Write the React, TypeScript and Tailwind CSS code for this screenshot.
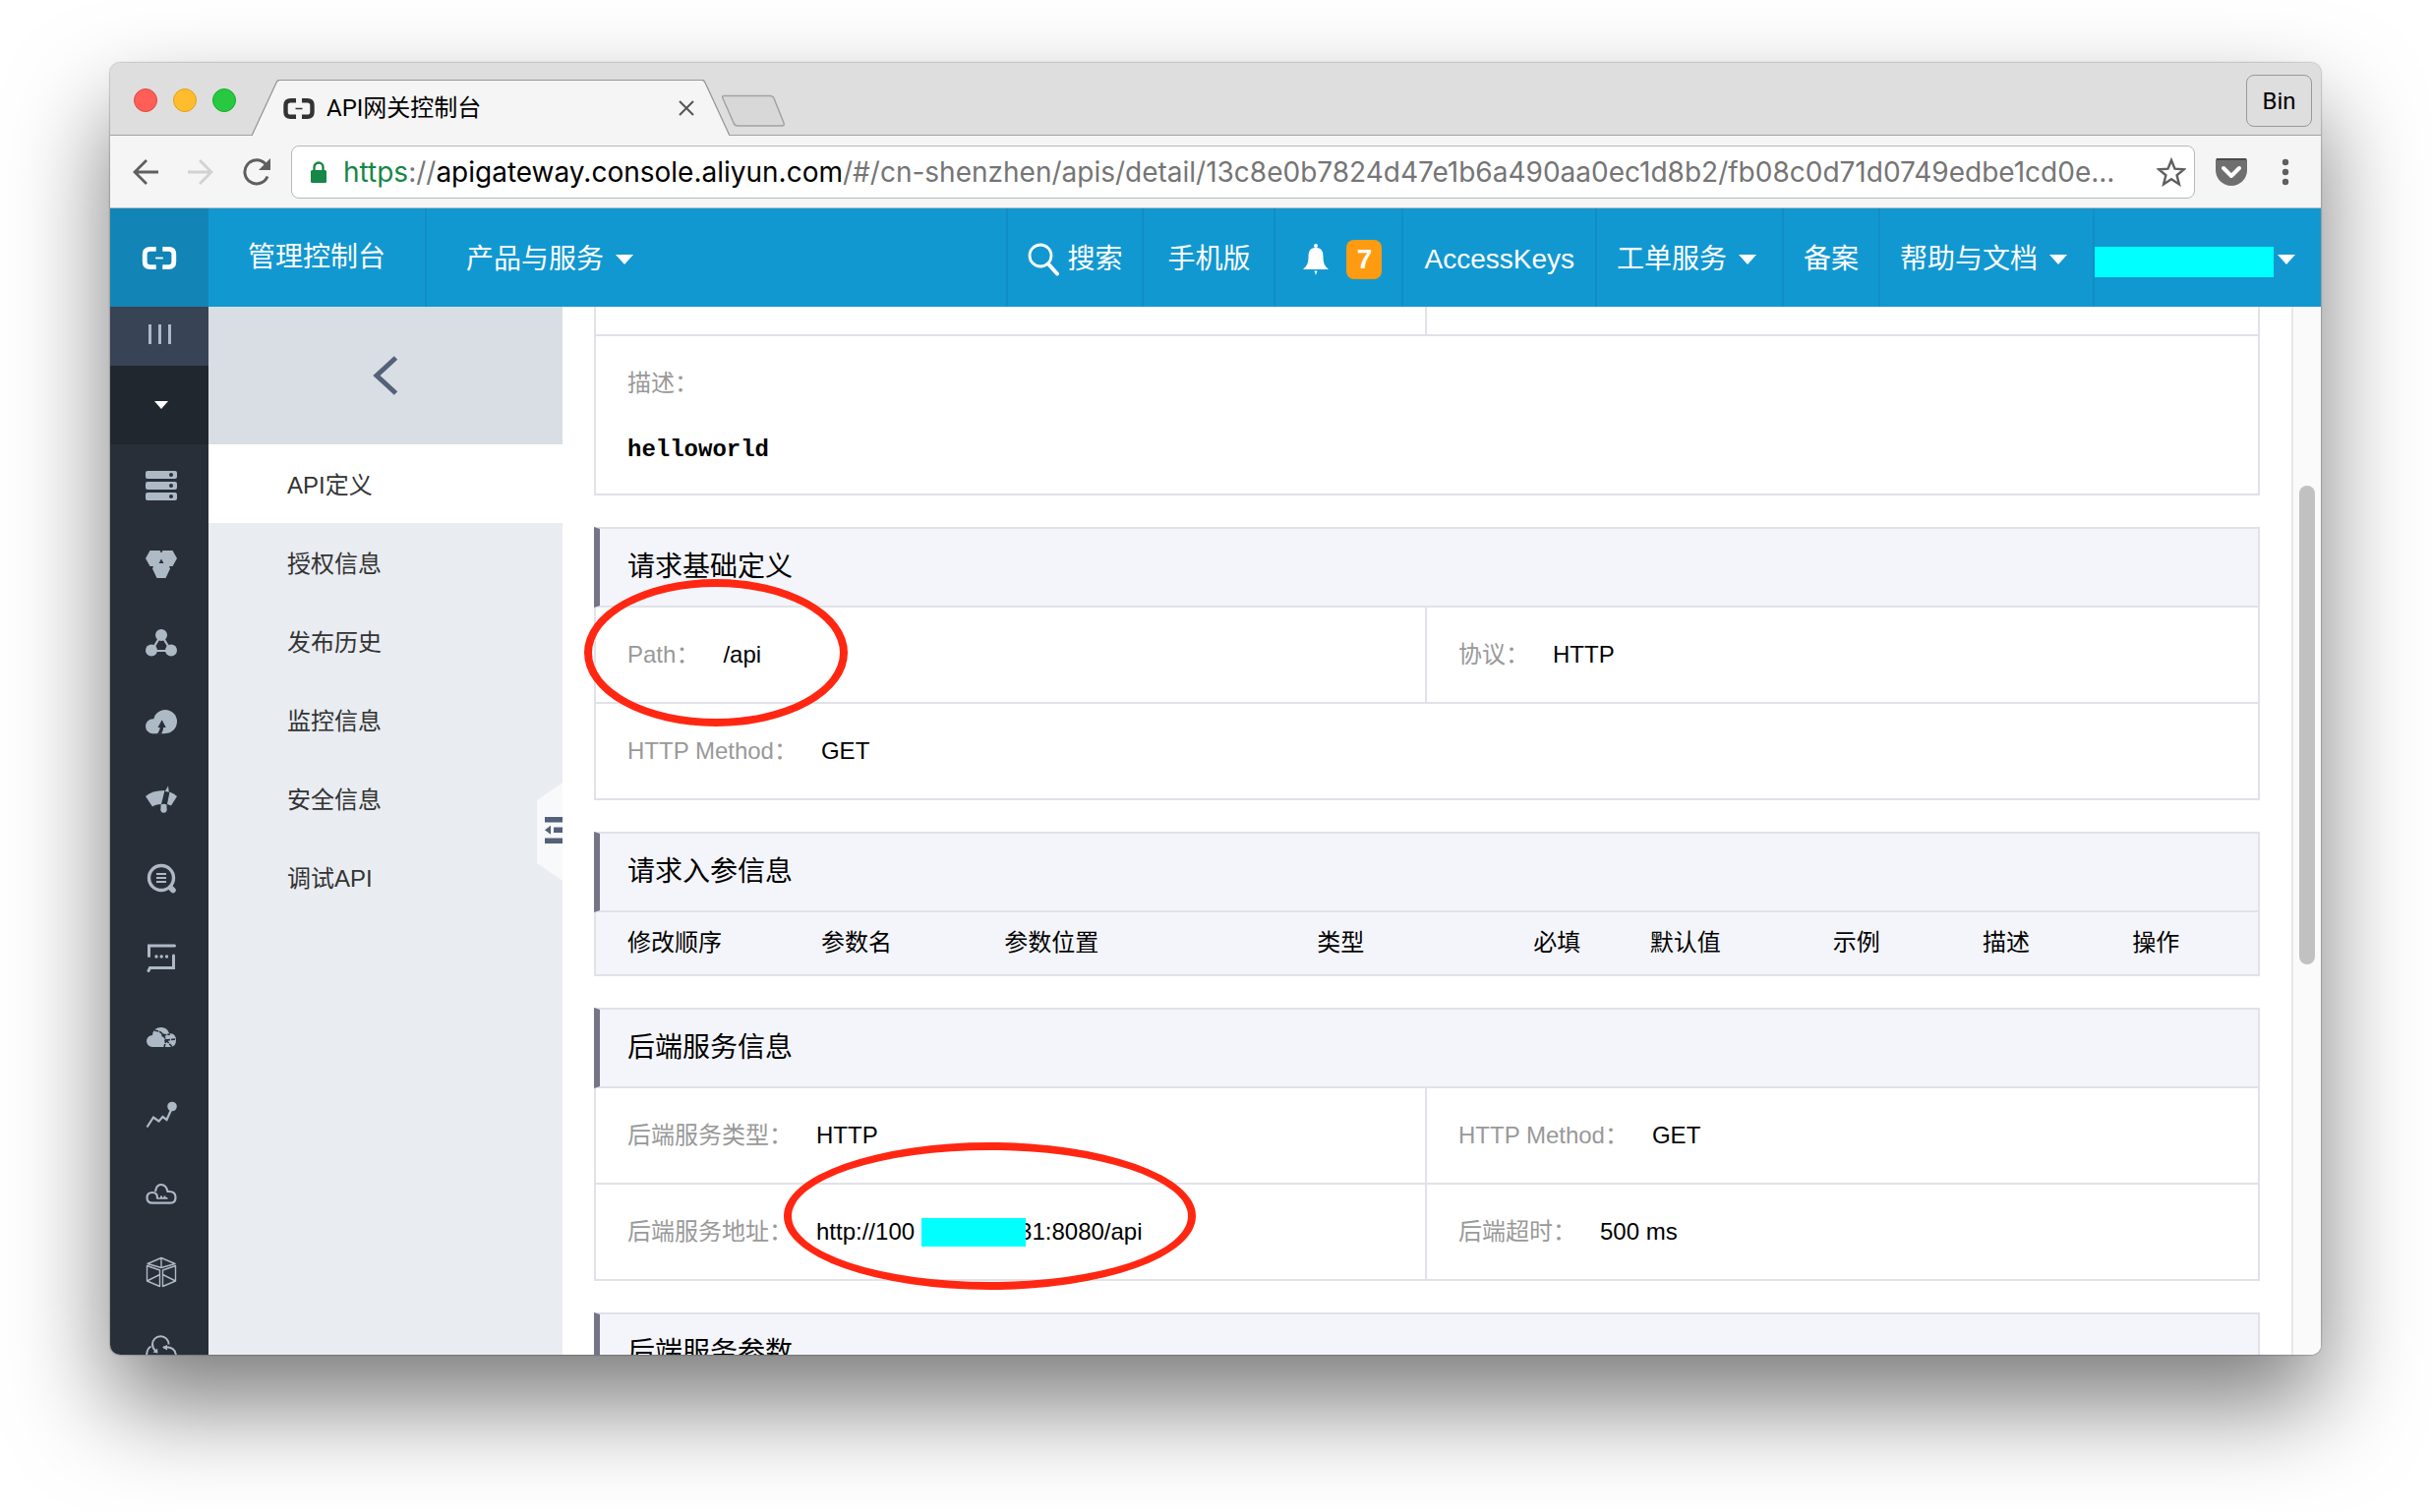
import React from "react";

const sans = "font-['Liberation_Sans','Noto_Sans_CJK_SC',sans-serif]";
const system = "font-[Roboto,'Noto_Sans_CJK_SC',sans-serif]";

function Caret({ className = "h-[10px] w-[18px]" }: { className?: string }) {
  return (
    <svg viewBox="0 0 18 10" className={`shrink-0 ${className}`} fill="currentColor" aria-hidden="true">
      <path d="M0 0h18L9 10z" />
    </svg>
  );
}

function BracketLogo({ className }: { className: string }) {
  return (
    <svg viewBox="0 0 32 21" className={className} fill="none" aria-hidden="true">
      <path d="M13 2.2H7.5Q2.5 2.2 2.5 7v7q0 4.800 5 4.800H13" stroke="currentColor" strokeWidth="4.400" />
      <path d="M19 2.200h5.500q5 0 5 4.800v7q0 4.800-5 4.800H19" stroke="currentColor" strokeWidth="4.400" />
      <path d="M12.500 10.500h7" stroke="currentColor" strokeWidth="1.600" />
    </svg>
  );
}

function TabStrip() {
  return (
    <div className="relative flex h-[74px] shrink-0 items-end bg-[#dedede]">
      <div className="absolute inset-x-0 bottom-0 h-px bg-[#a0a0a0]" />
      <div className="flex h-full w-[144px] items-center gap-4 pl-6 pt-0.5">
        <button aria-label="Close window" className="size-6 rounded-full border border-[#e2463f] bg-[#ff5f57]" />
        <button aria-label="Minimize window" className="size-6 rounded-full border border-[#e1a116] bg-[#ffbd2e]" />
        <button aria-label="Zoom window" className="size-6 rounded-full border border-[#12ac28] bg-[#28c940]" />
      </div>
      <div className="relative flex h-[57px]">
        <svg viewBox="0 0 28 57" className="h-full w-7" aria-hidden="true">
          <path d="M0 57L25 3Q26 .5 28 .5V57z" fill="#f5f5f5" />
          <path d="M0 57L25 3Q26 .5 28 .5" fill="none" stroke="#979797" strokeWidth="1.300" />
        </svg>
        <div className="flex w-[430px] items-center gap-3 border-t border-[#979797] bg-[#f5f5f5] pl-1 pr-2">
          <BracketLogo className="h-[21px] w-8 text-[#333]" />
          <span className={`${system} flex-1 text-2xl text-black`}>API网关控制台</span>
          <button aria-label="Close tab" className="text-[#555]">
            <svg viewBox="0 0 16 16" className="size-4" fill="none" stroke="currentColor" strokeWidth="2">
              <path d="M1 1l14 14M15 1L1 15" />
            </svg>
          </button>
        </div>
        <svg viewBox="0 0 28 57" className="h-full w-7" aria-hidden="true">
          <path d="M28 57L3 3Q2 .5 0 .5V57z" fill="#f5f5f5" />
          <path d="M28 57L3 3Q2 .5 0 .5" fill="none" stroke="#979797" strokeWidth="1.300" />
        </svg>
      </div>
      <button aria-label="New tab" className="mb-2 -ml-2.5">
        <svg viewBox="0 0 68 34" className="h-[34px] w-[68px]">
          <path d="M4 1.500h47q3 0 4 2.500l10 25q1 3-2 3H18q-3 0-4-3L3 4q-1-2.500 1-2.500z" fill="#d8d8d8" stroke="#a3a3a3" strokeWidth="1.500" />
        </svg>
      </button>
      <div className="flex-1" />
      <button className={`${system} mb-[9px] mr-[9px] h-[53px] w-[67px] rounded-lg border border-[#999] bg-[#dedede] text-2xl text-black`}>Bin</button>
    </div>
  );
}

function Toolbar() {
  return (
    <div className="flex h-[74px] shrink-0 items-center border-b border-[#b9b9b9] bg-[#f5f5f5] pl-[22px] pr-8">
      <button aria-label="Back" className="text-[#5f5f5f]">
        <svg viewBox="0 0 28 28" className="size-7" fill="none" stroke="currentColor" strokeWidth="2.800">
          <path d="M27 14H3M15 2L3 14l12 12" />
        </svg>
      </button>
      <button aria-label="Forward" className="ml-7 text-[#d2d2d2]">
        <svg viewBox="0 0 28 28" className="size-7" fill="none" stroke="currentColor" strokeWidth="2.800">
          <path d="M1 14h24M13 2l12 12-12 12" />
        </svg>
      </button>
      <button aria-label="Reload" className="ml-7 text-[#5f5f5f]">
        <svg viewBox="0 0 30 30" className="size-[30px]" fill="none">
          <path d="M26 19.500A12 12 0 1 1 24 7" stroke="currentColor" strokeWidth="3" />
          <path d="M29 1v12H17z" fill="currentColor" />
        </svg>
      </button>
      <div className="ml-5 flex h-[54px] min-w-0 flex-1 items-center rounded-lg border border-[#b8b8b8] bg-white pl-[18px] pr-2">
        <svg viewBox="0 0 18 22" className="h-[22px] w-[18px] shrink-0" fill="none" aria-hidden="true">
          <path d="M4.500 10V6a4.500 4.500 0 0 1 9 0v4" stroke="#168746" strokeWidth="2.400" />
          <rect x="1" y="9" width="16" height="13" rx="1.500" fill="#168746" />
        </svg>
        <a
          href="#/cn-shenzhen/apis"
          className="ml-4 min-w-0 flex-1 overflow-hidden whitespace-nowrap font-[Inter,sans-serif] text-[28px] leading-10 text-[#757575]"
        >
          <span className="text-[#168746]">https</span>://<span className="text-black">apigateway.console.aliyun.com</span>
          /#/cn-shenzhen/apis/detail/13c8e0b7824d47e1b6a490aa0ec1d8b2/fb08c0d71d0749edbe1cd0e...
        </a>
        <button aria-label="Bookmark this page" className="ml-2 text-[#5f5f5f]">
          <svg viewBox="0 0 30 30" className="size-[30px]" fill="none" stroke="currentColor" strokeWidth="2.400">
            <path d="M15 3l3.500 8.700 9.300.6-7.200 6 2.300 9.100L15 22.300l-7.900 5.100 2.300-9.100-7.200-6 9.300-.6z" />
          </svg>
        </button>
      </div>
      <button aria-label="Pocket" className="ml-5">
        <svg viewBox="0 0 34 30" className="h-[30px] w-[34px]" fill="none">
          <path d="M3 1h28q2 0 2 2v10a16 16 0 0 1-32 0V3q0-2 2-2z" fill="#6f6f6f" />
          <path d="M2 2h30" stroke="#4a4a4a" strokeWidth="2" />
          <path d="M9 11l8 8 8-8" stroke="#fff" strokeWidth="4" strokeLinecap="round" strokeLinejoin="round" />
        </svg>
      </button>
      <button aria-label="Menu" className="ml-[34px] text-[#5f5f5f]">
        <svg viewBox="0 0 8 28" className="h-7 w-2" fill="currentColor">
          <circle cx="4" cy="4" r="3.200" />
          <circle cx="4" cy="14" r="3.200" />
          <circle cx="4" cy="24" r="3.200" />
        </svg>
      </button>
    </div>
  );
}

function ConsoleHeader() {
  const item = "flex h-full items-center border-l-2 border-[#0f8ec5] pt-1";
  return (
    <header className="flex h-[100px] shrink-0 items-center whitespace-nowrap bg-[#1298d1] text-[28px] leading-10 text-white">
      <a href="#home" aria-label="Home" className="flex h-full w-[100px] items-center justify-center bg-[#1284b6]">
        <BracketLogo className="h-[23px] w-9" />
      </a>
      <a href="#console" className="flex h-full items-center px-10">管理控制台</a>
      <button className={`${item} gap-3 px-10`}>产品与服务<Caret /></button>
      <div className="flex-1" />
      <button className={`${item} gap-2 px-5`}>
        <svg viewBox="0 0 32 34" className="h-[34px] w-8" fill="none" stroke="currentColor" aria-hidden="true">
          <circle cx="13" cy="13" r="11" strokeWidth="2.800" />
          <path d="M21 21.500l9 10" strokeWidth="4" strokeLinecap="round" />
        </svg>
        搜索
      </button>
      <a href="#mobile" className={`${item} px-6`}>手机版</a>
      <button aria-label="消息 7" className={`${item} gap-[18px] pl-7 pr-5`}>
        <svg viewBox="0 0 26 32" className="h-8 w-[26px]" fill="currentColor" aria-hidden="true">
          <circle cx="13" cy="2" r="2" />
          <path d="M13 4c6 0 7.500 4 7.500 9 0 6 1 9 5.500 13H0c4.500-4 5.500-7 5.500-13 0-5 1.500-9 7.500-9z" />
          <path d="M11.500 27.500h3L13 32z" />
        </svg>
        <span className="flex h-10 w-9 items-center justify-center rounded-lg bg-[#ff9b10] font-bold">7</span>
      </button>
      <a href="#keys" className={`${item} px-[21px]`}>AccessKeys</a>
      <button className={`${item} gap-3 pl-5 pr-[26px]`}>工单服务<Caret /></button>
      <a href="#beian" className={`${item} px-5`}>备案</a>
      <button className={`${item} gap-3 pl-5 pr-[26px]`}>帮助与文档<Caret /></button>
      <button aria-label="Account" className={`${item} gap-1 pr-[26px]`}>
        <span className="mt-1 h-[31px] w-[182px] bg-[#0ff]" />
        <Caret />
      </button>
    </header>
  );
}

const railIcons: { name: string; art: React.ReactNode }[] = [
  {
    name: "Servers",
    art: (
      <>
        <path d="M2 1h28q2 0 2 2v4q0 2-2 2H2Q0 9 0 7V3q0-2 2-2zM2 12h28q2 0 2 2v4q0 2-2 2H2q-2 0-2-2v-4q0-2 2-2zM2 23h28q2 0 2 2v4q0 2-2 2H2q-2 0-2-2v-4q0-2 2-2z" fill="currentColor" />
        <g fill="#282f38"><circle cx="26" cy="5" r="2" /><circle cx="26" cy="16" r="2" /><circle cx="26" cy="27" r="2" /></g>
      </>
    ),
  },
  {
    name: "Clusters",
    art: <path fillRule="evenodd" d="M4.500 2h10l1.500 2.500L17.500 2h10L32 10l-4.500 8H24l1 2.500L20.500 30h-9L7 20.500 8 18H4.500L0 10zM16 10.500L13.500 15h5z" fill="currentColor" />,
  },
  {
    name: "Network",
    art: (
      <>
        <path d="M16 8L6 24h20z" fill="none" stroke="currentColor" strokeWidth="2.200" />
        <g fill="currentColor"><circle cx="16" cy="8" r="6" /><circle cx="6" cy="23.500" r="6" /><circle cx="26" cy="23.500" r="6" /></g>
      </>
    ),
  },
  {
    name: "Cloud upload",
    art: (
      <>
        <g fill="currentColor"><circle cx="20" cy="16" r="12" /><circle cx="7.500" cy="20.800" r="7.500" /><path d="M7.500 20H20v8.200H7.500z" /></g>
        <path d="M16.700 14.300l4 7.700h-2.500q-.2 3.500-2.200 6.500h-4q2.500-3 2.800-6.500h-2.300z" fill="#282f38" />
      </>
    ),
  },
  {
    name: "Gauge",
    art: (
      <>
        <path d="M0 12Q6 6 19.500 6L16 20q-6 0-9 2.500z" fill="currentColor" />
        <path d="M24.500 7.500Q29 9 32 12l-6 9.500-4-1.500z" fill="currentColor" />
        <path d="M23 1.500L19.800 7l4 .8z" fill="currentColor" />
        <path d="M15.500 20.500q3-1.500 6 0v3.500a3.300 3.300 0 1 1-6 0z" fill="currentColor" />
      </>
    ),
  },
  {
    name: "Log search",
    art: (
      <g fill="none" stroke="currentColor">
        <circle cx="16" cy="15" r="12.500" strokeWidth="3.400" />
        <path d="M25.500 25l2.500 2.500" strokeWidth="5.500" strokeLinecap="round" />
        <path d="M11 11h10M11 15h10M11 19h10" strokeWidth="2" />
      </g>
    ),
  },
  {
    name: "Messages",
    art: (
      <>
        <path d="M3.500 14.500V4H29.500M28.500 14v12.500H4.500L3 29.500" fill="none" stroke="currentColor" strokeWidth="3" strokeLinecap="round" />
        <g fill="currentColor"><circle cx="11" cy="15" r="1.700" /><circle cx="16.200" cy="15" r="1.700" /><circle cx="21.500" cy="15" r="1.700" /></g>
      </>
    ),
  },
  {
    name: "Cloud security",
    art: (
      <>
        <path d="M7 27a6 6 0 0 1 0-12q1-8 9-8 6 0 8 6 7 0 7 7t-6 7z" fill="currentColor" />
        <path d="M9 10q7 1 9 5l7-1M18 15l3 5-2 7M21 20l10-1M21 20l6 7" fill="none" stroke="#282f38" strokeWidth="1.600" strokeDasharray="4 1" />
        <g fill="#282f38"><circle cx="18" cy="15" r="1.800" /><circle cx="21" cy="20.500" r="1.800" /></g>
      </>
    ),
  },
  {
    name: "Monitoring",
    art: (
      <>
        <path d="M1.500 28.500L8 18.500l5.500 4 4-4.500 4 3L26 11" fill="none" stroke="currentColor" strokeWidth="2.200" />
        <circle cx="27" cy="7.500" r="4.800" fill="currentColor" />
      </>
    ),
  },
  {
    name: "Cloud storage",
    art: (
      <>
        <path d="M12 21.500Q12.500 15 7 15Q1.500 15 1.500 20.200Q1.500 25.700 7 25.700H25.500Q30.500 25.700 30.500 20Q30.500 14 24 14H22.500Q21 7 15.700 7Q11 7 10 14" fill="none" stroke="currentColor" strokeWidth="2.200" />
        <path d="M12 21.800v-1.500h3v-1.800h2V20h1.500v-1.500h2V20h2v1.800z" fill="currentColor" />
      </>
    ),
  },
  {
    name: "Containers",
    art: (
      <path d="M2 7.500L16 1.500l14 6-14 4zM16 1.500v10M1.500 9.500L14.500 14v16.500L1.500 25zM30.500 9.500L17.500 14v16.500L30.500 25zM1.500 25l13-6.500M30.500 25l-13-6.500" fill="none" stroke="currentColor" strokeWidth="1.400" strokeLinejoin="round" />
    ),
  },
  {
    name: "Services",
    art: (
      <>
        <g fill="none" stroke="currentColor" strokeWidth="2">
          <path d="M10.500 16.500Q7 13 7 9.500A8.300 8.300 0 0 1 23.600 9.500" />
          <path d="M18 12.500Q31 11 31 22M5.500 11.500Q1 14 1 22" />
        </g>
        <path d="M12.500 18.500l-5-1 4.500-4zM17 12.500l5-2.500v5.500z" fill="currentColor" />
      </>
    ),
  },
];

function Rail() {
  return (
    <nav aria-label="Products" className="flex w-[100px] shrink-0 flex-col overflow-hidden bg-[#282f38] text-[#aeb9c6]">
      <button aria-label="Expand" className="flex h-[60px] shrink-0 items-center justify-center gap-[7px] bg-[#394356] pb-1">
        <span className="h-5 w-[3px] bg-current" />
        <span className="h-5 w-[3px] bg-current" />
        <span className="h-5 w-[3px] bg-current" />
      </button>
      <button aria-label="Toggle products" className="flex h-20 shrink-0 items-center justify-center bg-[#20272e] pl-1 text-white">
        <Caret className="h-2 w-[14px]" />
      </button>
      {railIcons.map((icon) => (
        <a key={icon.name} href="#product" aria-label={icon.name} className="flex h-20 shrink-0 items-center justify-center pl-1 pt-1">
          <svg viewBox="0 0 32 32" className="size-8">{icon.art}</svg>
        </a>
      ))}
    </nav>
  );
}

const sections = ["API定义", "授权信息", "发布历史", "监控信息", "安全信息", "调试API"];

function SideNav() {
  return (
    <nav aria-label="API" className="relative w-[360px] shrink-0 bg-[#e9ecf1] text-2xl text-[#333]">
      <button aria-label="Back" className="flex h-[140px] w-full items-center justify-center bg-[#d9dde4] text-[#536179]">
        <svg viewBox="0 0 26 40" className="h-10 w-[26px]" fill="none" stroke="currentColor" strokeWidth="5">
          <path d="M23.500 2L4 20l19.500 18" />
        </svg>
      </button>
      {sections.map((label, i) => (
        <a key={label} href="#section" className={`flex h-20 items-center pl-20 pt-1 ${i === 0 ? "bg-white" : ""}`}>{label}</a>
      ))}
      <button aria-label="Collapse" className="absolute right-0 top-[484px]">
        <svg viewBox="0 0 26 100" className="h-[100px] w-[26px]">
          <path d="M26 0L0 18v64l26 18z" fill="#f7f9fa" />
          <path d="M8 35h18v5.500H8zM17 45.500h9v5.500h-9zM8 56.500h18V62H8zM8 48.200l6-4.500v9z" fill="#536179" />
        </svg>
      </button>
    </nav>
  );
}

function Field({ label, children, className = "" }: { label: string; children: React.ReactNode; className?: string }) {
  return (
    <div className={`flex h-[98px] items-center gap-6 border-b-2 border-[#e1e2e8] pl-8 ${className}`}>
      <dt className="text-[#999]">{label}：</dt>
      <dd>{children}</dd>
    </div>
  );
}

function Card({ title, children }: { title: string; children?: React.ReactNode }) {
  return (
    <section className="mt-8 shrink-0">
      <h2 className="flex h-[82px] items-center border-y-2 border-l-[6px] border-r-2 border-y-[#e1e2e8] border-l-[#75748a] border-r-[#e1e2e8] bg-[#f4f5fa] pl-7 text-[28px]">
        {title}
      </h2>
      {children}
    </section>
  );
}

const half = "border-r-2";
const columns = [
  { label: "修改顺序", width: "w-[13.600%]" },
  { label: "参数名", width: "w-[11%]" },
  { label: "参数位置", width: "w-[18.800%]" },
  { label: "类型", width: "w-[13%]" },
  { label: "必填", width: "w-[7%]" },
  { label: "默认值", width: "w-[11%]" },
  { label: "示例", width: "w-[9%]" },
  { label: "描述", width: "w-[9%]" },
  { label: "操作", width: "w-[7.600%]" },
];

function Ring({ className }: { className: string }) {
  return <span aria-hidden="true" className={`pointer-events-none absolute rounded-[50%] border-8 border-[#ff2712] ${className}`} />;
}

function Content() {
  return (
    <main className="flex min-w-0 flex-1 bg-white text-2xl text-black">
      <div className="flex min-w-0 flex-1 flex-col overflow-hidden px-8">
        <section className="shrink-0 border-x-2 border-b-2 border-[#e1e2e8]">
          <div className="grid h-[30px] grid-cols-2 border-b-2 border-[#e1e2e8]">
            <div className="border-r-2 border-[#e1e2e8]" />
          </div>
          <dl className="flex h-40 flex-col justify-center gap-9 pl-8 pt-1">
            <dt className="text-[#999]">描述：</dt>
            <dd className="font-['Liberation_Mono',monospace] font-bold">helloworld</dd>
          </dl>
        </section>

        <Card title="请求基础定义">
          <dl className="grid grid-cols-2 border-x-2 border-[#e1e2e8]">
            <Field label="Path" className={`relative ${half}`}>
              /api
              <Ring className="-left-3 -top-[29px] h-[150px] w-[268px]" />
            </Field>
            <Field label="协议">HTTP</Field>
            <Field label="HTTP Method" className="col-span-2">GET</Field>
          </dl>
        </Card>

        <Card title="请求入参信息">
          <table className="w-full table-fixed border-x-2 border-b-2 border-[#e1e2e8] bg-[#f4f5fa]">
            <thead>
              <tr className="h-16 text-left">
                {columns.map((c, i) => (
                  <th key={c.label} className={`pb-0.5 font-normal ${c.width} ${i === 0 ? "pl-8" : ""}`}>{c.label}</th>
                ))}
              </tr>
            </thead>
          </table>
        </Card>

        <Card title="后端服务信息">
          <dl className="grid grid-cols-2 border-x-2 border-[#e1e2e8]">
            <Field label="后端服务类型" className={half}>HTTP</Field>
            <Field label="HTTP Method">GET</Field>
            <Field label="后端服务地址" className={`relative ${half}`}>
              <span className="flex items-center">
                http://100
                <span className="relative z-10 -mr-[7px] ml-[7px] h-[29px] w-[106px] bg-[#0ff]" />
                31:8080/api
              </span>
              <Ring className="-top-[43px] left-[191px] h-[150px] w-[419px]" />
            </Field>
            <Field label="后端超时">500 ms</Field>
          </dl>
        </Card>

        <Card title="后端服务参数" />
      </div>
      <div className="w-[30px] shrink-0 border-l-2 border-[#e8e8e8] bg-[#fafafa] px-1.5 pt-[182px]">
        <div className="h-[487px] w-4 rounded-full bg-[#c1c1c1]" />
      </div>
    </main>
  );
}

export default function App() {
  return (
    <div className={`${sans} flex h-screen flex-col overflow-hidden bg-white px-28 pb-40 pt-16`}>
      <div className="flex min-h-0 flex-1 flex-col overflow-hidden rounded-[10px] shadow-[0_0_2px_rgba(0,0,0,0.6),0_50px_100px_rgba(0,0,0,0.52)]">
        <TabStrip />
        <Toolbar />
        <ConsoleHeader />
        <div className="flex min-h-0 flex-1">
          <Rail />
          <SideNav />
          <Content />
        </div>
      </div>
    </div>
  );
}
